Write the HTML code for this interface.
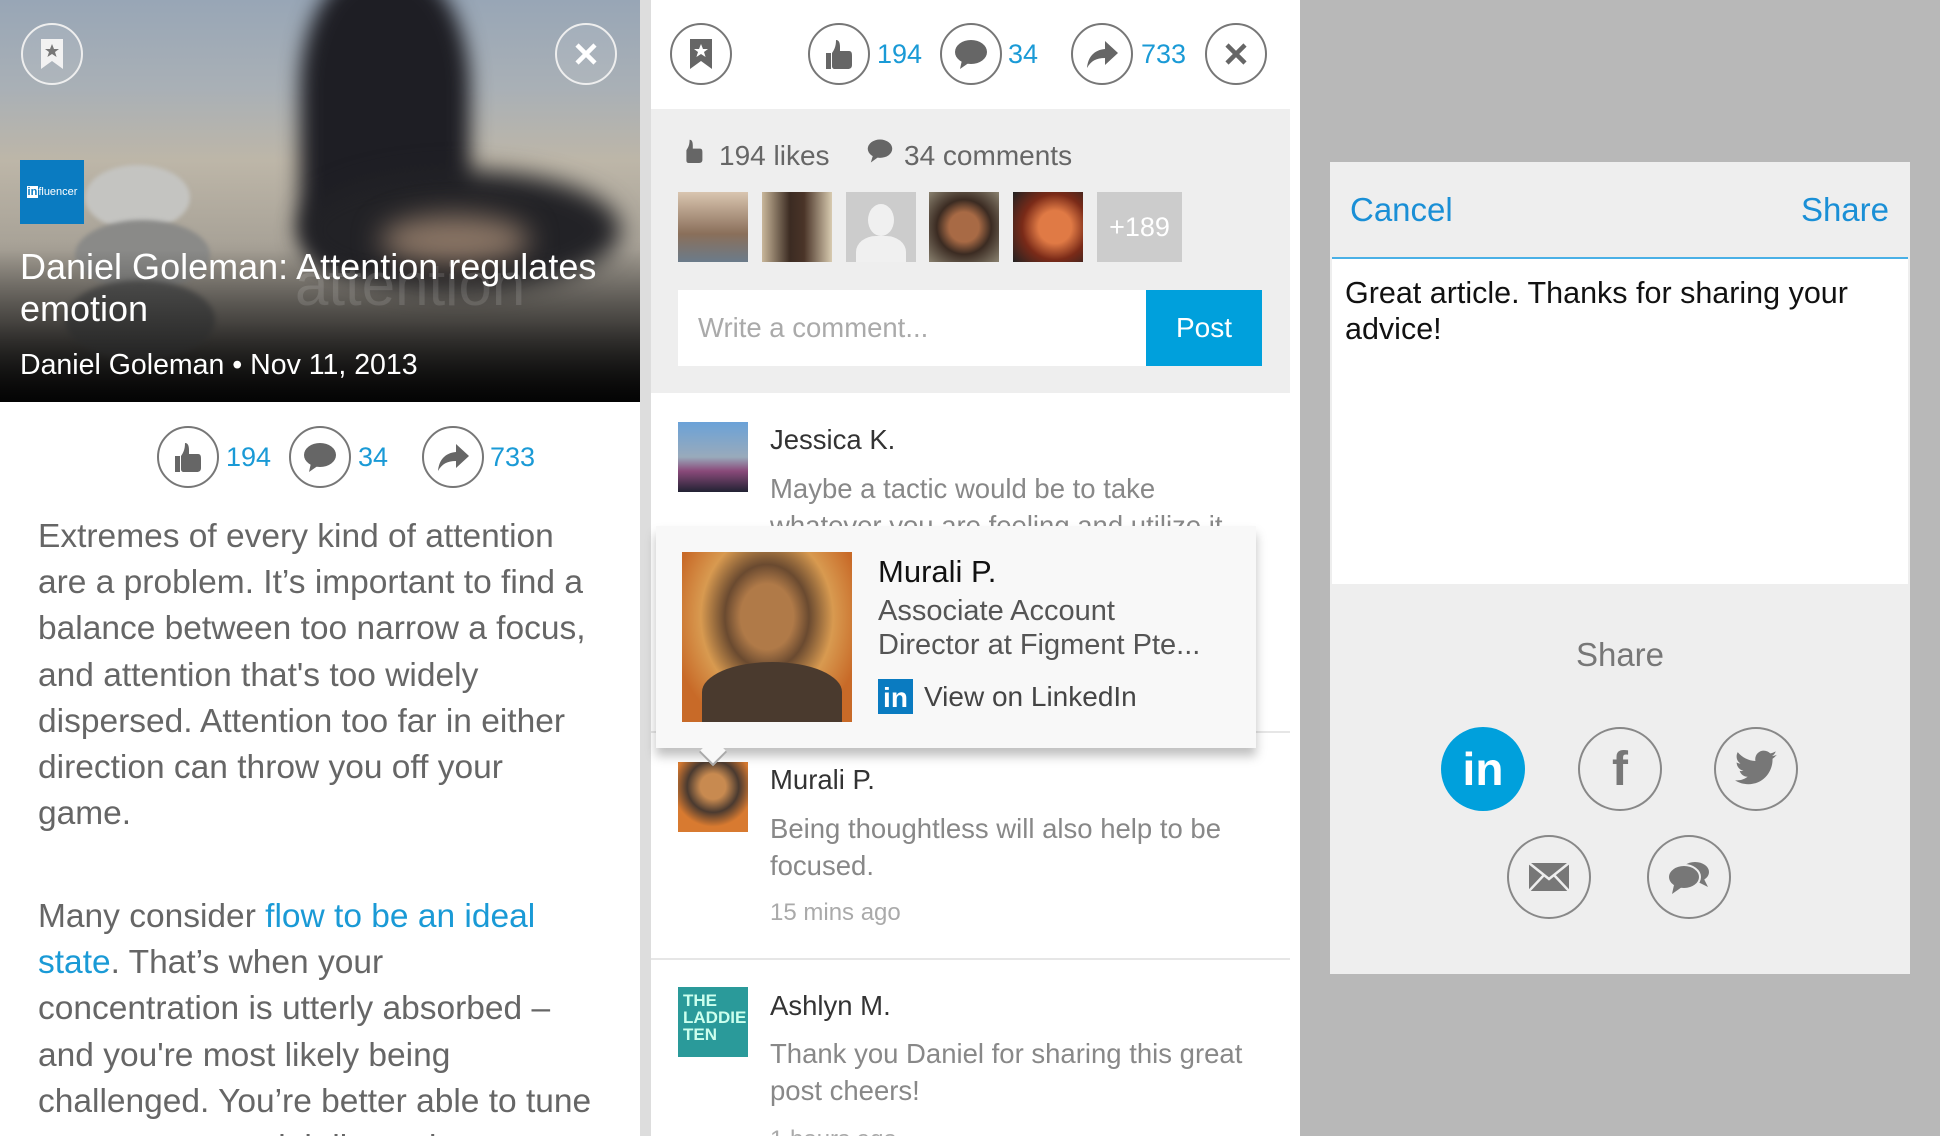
<!DOCTYPE html>
<html><head><meta charset="utf-8"><style>
*{margin:0;padding:0;box-sizing:border-box}
html,body{width:1940px;height:1136px;overflow:hidden;background:#fff}
body{font-family:"Liberation Sans",sans-serif}
#root{position:relative;width:1940px;height:1136px;overflow:hidden}
.a{position:absolute;white-space:nowrap}
.circ{position:absolute;width:62px;height:62px;border:2px solid #777;border-radius:50%;display:flex;align-items:center;justify-content:center}
.num{position:absolute;font-size:27px;color:#1a9ad6;line-height:32px}
.ct{font-size:27.5px;color:#888;line-height:37px}
.nm{font-size:27.5px;color:#333}
</style></head><body><div id="root">

<!-- Panel 1 header photo -->
<div class="a" style="left:0;top:0;width:640px;height:402px;overflow:hidden;background:linear-gradient(180deg,#98a6b6 0%,#a9b0b6 22%,#bdb6a8 40%,#a9a398 60%,#75716b 80%,#1a1a1a 100%)">
  <div class="a" style="left:300px;top:-30px;width:170px;height:300px;background:#1e1e24;border-radius:40% 40% 20% 20%;filter:blur(10px)"></div>
  <div class="a" style="left:300px;top:170px;width:320px;height:120px;background:#222226;border-radius:50%;filter:blur(12px)"></div>
  <div class="a" style="left:380px;top:215px;width:150px;height:50px;background:#8a7565;border-radius:50%;filter:blur(14px)"></div>
  <div class="a" style="left:85px;top:165px;width:105px;height:65px;background:#c4c4c1;border-radius:50%;filter:blur(2px)"></div>
  <div class="a" style="left:75px;top:220px;width:135px;height:70px;background:#8a8a88;border-radius:50%;filter:blur(2px)"></div>
  <div class="a" style="left:65px;top:280px;width:150px;height:80px;background:#5a5a59;border-radius:50%;filter:blur(3px)"></div>
  <div class="a" style="left:0;top:250px;width:640px;height:152px;background:linear-gradient(180deg,rgba(0,0,0,0),rgba(0,0,0,.85))"></div>
  <div class="a" style="left:295px;top:250px;font-size:60px;color:rgba(255,255,255,.12);font-weight:300">attention</div>
</div>
<div class="circ" style="left:21px;top:23px;border-color:#eee;background:rgba(255,255,255,.08)"><svg width="22" height="30" viewBox="0 0 22 30"><path d="M0 0H22V30L11 22L0 30Z" fill="#f2f2f2"/><path d="M11 5l2 5h5l-4 3 1.6 5L11 15l-4.6 3L8 13 4 10h5z" fill="#777"/></svg></div>
<div class="circ" style="left:555px;top:23px;border-color:#eee;background:rgba(255,255,255,.08)"><svg width="26" height="26"><path d="M4 4L22 22M22 4L4 22" stroke="#fff" stroke-width="4.5"/></svg></div>
<div class="a" style="left:20px;top:160px;width:64px;height:64px;background:#0a7bc1;color:#fff;font-size:11px;line-height:64px;text-align:center"><b style="background:#fff;color:#0a7bc1;padding:0 1px">in</b>fluencer</div>
<div class="a" style="left:20px;top:246px;font-size:36px;color:#fff;line-height:42px;white-space:normal;width:620px">Daniel Goleman: Attention regulates<br>emotion</div>
<div class="a" style="left:20px;top:349px;font-size:28.5px;color:#fff;line-height:32px">Daniel Goleman • Nov 11, 2013</div>

<!-- Panel 1 actions -->
<div class="circ" style="left:157px;top:426px"><svg width="30" height="32" viewBox="0 0 30 32"><path d="M12 2c3 0 4 3 4 7l0 4h9c3 0 3 3 3 5v9c0 3-2 4-4 4H11c-2 0-3-1-3-3V15c2-3 4-6 4-13z" fill="#666"/><rect x="2" y="15" width="5" height="16" fill="#666"/></svg></div>
<div class="num" style="left:226px;top:441px">194</div>
<div class="circ" style="left:289px;top:426px"><svg width="34" height="32" viewBox="0 0 34 32"><ellipse cx="17" cy="14" rx="16" ry="12" fill="#666"/><path d="M8 22L6 31L16 24Z" fill="#666"/></svg></div>
<div class="num" style="left:358px;top:441px">34</div>
<div class="circ" style="left:422px;top:426px"><svg width="34" height="30" viewBox="0 0 34 30"><path d="M20 2L33 14L20 26V19C11 19 6 22 2 29C3 18 9 11 20 10Z" fill="#666"/></svg></div>
<div class="num" style="left:490px;top:441px">733</div>

<div class="a" style="left:38px;top:514px;font-size:33.5px;line-height:46.2px;color:#666;width:600px">Extremes of every kind of attention<br>are a problem. It’s important to find a<br>balance between too narrow a focus,<br>and attention that's too widely<br>dispersed. Attention too far in either<br>direction can throw you off your<br>game.</div>
<div class="a" style="left:38px;top:894px;font-size:33.5px;line-height:46.2px;color:#666;width:600px">Many consider <span style="color:#1a9ad6">flow to be an ideal<br>state</span>. That’s when your<br>concentration is utterly absorbed –<br>and you're most likely being<br>challenged. You’re better able to tune<br>out every potential distraction</div>

<!-- divider strip -->
<div class="a" style="left:640px;top:0;width:11px;height:1136px;background:#ddd"></div>

<!-- Panel 2 -->
<div class="a" style="left:651px;top:0;width:649px;height:1136px;background:#fff"></div>
<div class="circ" style="left:670px;top:23px"><svg width="22" height="30" viewBox="0 0 22 30"><path d="M0 0H22V30L11 22L0 30Z" fill="#666"/><path d="M11 5l2 5h5l-4 3 1.6 5L11 15l-4.6 3L8 13 4 10h5z" fill="#fff"/></svg></div>
<div class="circ" style="left:808px;top:23px"><svg width="30" height="32" viewBox="0 0 30 32"><path d="M12 2c3 0 4 3 4 7l0 4h9c3 0 3 3 3 5v9c0 3-2 4-4 4H11c-2 0-3-1-3-3V15c2-3 4-6 4-13z" fill="#666"/><rect x="2" y="15" width="5" height="16" fill="#666"/></svg></div>
<div class="num" style="left:877px;top:38px">194</div>
<div class="circ" style="left:940px;top:23px"><svg width="34" height="32" viewBox="0 0 34 32"><ellipse cx="17" cy="14" rx="16" ry="12" fill="#666"/><path d="M8 22L6 31L16 24Z" fill="#666"/></svg></div>
<div class="num" style="left:1008px;top:38px">34</div>
<div class="circ" style="left:1071px;top:23px"><svg width="34" height="30" viewBox="0 0 34 30"><path d="M20 2L33 14L20 26V19C11 19 6 22 2 29C3 18 9 11 20 10Z" fill="#666"/></svg></div>
<div class="num" style="left:1141px;top:38px">733</div>
<div class="circ" style="left:1205px;top:23px"><svg width="26" height="26"><path d="M4 4L22 22M22 4L4 22" stroke="#666" stroke-width="4.5"/></svg></div>

<div class="a" style="left:651px;top:109px;width:639px;height:284px;background:#eee"></div>
<svg class="a" style="left:680px;top:138px" width="24" height="26" viewBox="0 0 30 32"><path d="M12 2c3 0 4 3 4 7l0 4h9c3 0 3 3 3 5v9c0 3-2 4-4 4H11c-2 0-3-1-3-3V15c2-3 4-6 4-13z" fill="#666"/></svg>
<div class="a" style="left:719px;top:140px;font-size:28px;color:#666">194 likes</div>
<svg class="a" style="left:867px;top:138px" width="26" height="26" viewBox="0 0 34 32"><ellipse cx="17" cy="13" rx="16" ry="12" fill="#666"/><path d="M8 21L5 31L16 23Z" fill="#666"/></svg>
<div class="a" style="left:904px;top:140px;font-size:28px;color:#666">34 comments</div>
<div class="a" style="left:678px;top:192px;width:70px;height:70px;background:linear-gradient(#d9c5b0,#8a6f5a 60%,#6b7b8a)"></div>
<div class="a" style="left:762px;top:192px;width:70px;height:70px;background:linear-gradient(90deg,#c9b79a,#3b2b22 40%,#4a3428 60%,#d8cbb0)"></div>
<div class="a" style="left:846px;top:192px;width:70px;height:70px;background:#ccc;overflow:hidden"><div class="a" style="left:22px;top:12px;width:26px;height:32px;border-radius:50%;background:#f0f0f0"></div><div class="a" style="left:10px;top:44px;width:50px;height:40px;border-radius:40% 40% 0 0;background:#f0f0f0"></div></div>
<div class="a" style="left:929px;top:192px;width:70px;height:70px;background:radial-gradient(circle at 50% 50%,#a86a45 30%,#3b2b22 55%,#8a8270)"></div>
<div class="a" style="left:1013px;top:192px;width:70px;height:70px;background:radial-gradient(circle at 60% 50%,#e07a45 30%,#7a2a18 60%,#222)"></div>
<div class="a" style="left:1097px;top:192px;width:85px;height:70px;background:#ccc;color:#fff;font-size:27px;line-height:70px;text-align:center">+189</div>
<div class="a" style="left:678px;top:290px;width:468px;height:76px;background:#fff;color:#aaa;font-size:27.5px;line-height:76px;padding-left:20px">Write a comment...</div>
<div class="a" style="left:1146px;top:290px;width:116px;height:76px;background:#00a0dc;color:#fff;font-size:28px;line-height:76px;text-align:center">Post</div>

<!-- comments -->
<div class="a" style="left:678px;top:422px;width:70px;height:70px;background:linear-gradient(180deg,#6aa2d8,#9ab 50%,#8a4a7a 70%,#223 100%)"></div>
<div class="a nm" style="left:770px;top:424px">Jessica K.</div>
<div class="a ct" style="left:770px;top:470px">Maybe a tactic would be to take<br>whatever you are feeling and utilize it</div>

<div class="a" style="left:651px;top:731px;width:639px;height:2px;background:#e6e6e6"></div>
<div class="a" style="left:678px;top:762px;width:70px;height:70px;background:radial-gradient(circle at 50% 35%,#c88a50 22%,#4a3a30 45%,#d87a30 70%)"></div>
<div class="a nm" style="left:770px;top:764px">Murali P.</div>
<div class="a ct" style="left:770px;top:810px">Being thoughtless will also help to be<br>focused.</div>
<div class="a" style="left:770px;top:899px;font-size:24px;color:#aaa">15 mins ago</div>
<div class="a" style="left:651px;top:958px;width:639px;height:2px;background:#e6e6e6"></div>
<div class="a" style="left:678px;top:987px;width:70px;height:70px;background:#2a9a9a;color:#cfe;font-size:17px;line-height:17px;padding:5px;font-weight:bold">THE<br>LADDIE<br>TEN</div>
<div class="a nm" style="left:770px;top:990px">Ashlyn M.</div>
<div class="a ct" style="left:770px;top:1035px">Thank you Daniel for sharing this great<br>post cheers!</div>
<div class="a" style="left:770px;top:1126px;font-size:24px;color:#aaa">1 hours ago</div>

<!-- popup -->
<div class="a" style="left:656px;top:526px;width:600px;height:222px;background:#f8f8f8;box-shadow:0 8px 10px rgba(0,0,0,.25)"></div>
<div class="a" style="left:703px;top:742px;width:20px;height:20px;background:#f8f8f8;border-right:2px solid #aaa;border-bottom:2px solid #aaa;transform:rotate(45deg)"></div>
<div class="a" style="left:682px;top:552px;width:170px;height:170px;background:radial-gradient(ellipse at 50% 38%,#b07a48 22%,#6a4a30 35%,#d89a50 55%,#c86a28 80%)"><div class="a" style="left:20px;top:110px;width:140px;height:60px;background:#4a3a2e;border-radius:50% 50% 0 0"></div></div>
<div class="a" style="left:878px;top:554px;font-size:31px;color:#111">Murali P.</div>
<div class="a" style="left:878px;top:594px;font-size:29px;color:#555;line-height:34px">Associate Account<br>Director at Figment Pte...</div>
<div class="a" style="left:878px;top:679px;width:35px;height:35px;background:#0a7bc1;color:#fff;font-weight:bold;font-size:28px;line-height:38px;text-align:center">in</div>
<div class="a" style="left:924px;top:681px;font-size:28px;color:#444">View on LinkedIn</div>

<!-- Panel 3 -->
<div class="a" style="left:1300px;top:0;width:640px;height:1136px;background:#b8b8b8"></div>
<div class="a" style="left:1330px;top:162px;width:580px;height:812px;background:#eee"></div>
<div class="a" style="left:1350px;top:191px;font-size:33px;color:#1a8fd6">Cancel</div>
<div class="a" style="left:1780px;top:191px;font-size:33px;color:#1a8fd6;width:109px;text-align:right">Share</div>
<div class="a" style="left:1332px;top:257px;width:576px;height:2px;background:#4ab0e6"></div>
<div class="a" style="left:1332px;top:259px;width:576px;height:325px;background:#fff"></div>
<div class="a" style="left:1345px;top:275px;font-size:30.5px;color:#111;line-height:36px">Great article. Thanks for sharing your<br>advice!</div>
<div class="a" style="left:1520px;top:636px;width:200px;text-align:center;font-size:33px;color:#777">Share</div>
<div class="a" style="left:1441px;top:727px;width:84px;height:84px;border-radius:50%;background:#00a0dc;color:#fff;font-weight:bold;font-size:46px;line-height:84px;text-align:center">in</div>
<div class="circ" style="left:1578px;top:727px;width:84px;height:84px;border-color:#888"><span style="font-weight:bold;font-size:48px;color:#777">f</span></div>
<div class="circ" style="left:1714px;top:727px;width:84px;height:84px;border-color:#888"><svg width="46" height="38" viewBox="0 0 24 20"><path d="M23 2.5c-.8.4-1.7.6-2.6.7.9-.6 1.6-1.4 2-2.5-.9.5-1.9.9-2.9 1.1C18.6.9 17.4.3 16.1.3c-2.5 0-4.5 2-4.5 4.5 0 .4 0 .7.1 1C7.9 5.6 4.6 3.8 2.4 1.1c-.4.7-.6 1.4-.6 2.3 0 1.6.8 2.9 2 3.7-.7 0-1.4-.2-2-.6 0 2.2 1.6 4 3.6 4.4-.4.1-.8.2-1.2.2-.3 0-.6 0-.8-.1.6 1.8 2.2 3.1 4.2 3.1-1.5 1.2-3.5 1.9-5.600 1.9H1c2 1.3 4.4 2 6.9 2 8.3 0 12.8-6.9 12.8-12.8v-.6c.9-.6 1.6-1.4 2.3-2.1z" fill="#777"/></svg></div>
<div class="circ" style="left:1507px;top:835px;width:84px;height:84px;border-color:#888"><svg width="42" height="30" viewBox="0 0 42 30"><rect x="1" y="1" width="40" height="28" fill="#777"/><path d="M1 1L21 17L41 1M1 29L16 13M41 29L26 13" stroke="#eee" stroke-width="2.5" fill="none"/></svg></div>
<div class="circ" style="left:1647px;top:835px;width:84px;height:84px;border-color:#888"><svg width="46" height="36" viewBox="0 0 46 36"><ellipse cx="29" cy="13" rx="15" ry="11" fill="#777" stroke="#eee" stroke-width="2"/><path d="M38 20L42 28L32 23Z" fill="#777"/><ellipse cx="18" cy="18" rx="16" ry="12" fill="#777" stroke="#eee" stroke-width="2"/><path d="M8 26L6 35L16 28Z" fill="#777"/></svg></div>
</div></body></html>
